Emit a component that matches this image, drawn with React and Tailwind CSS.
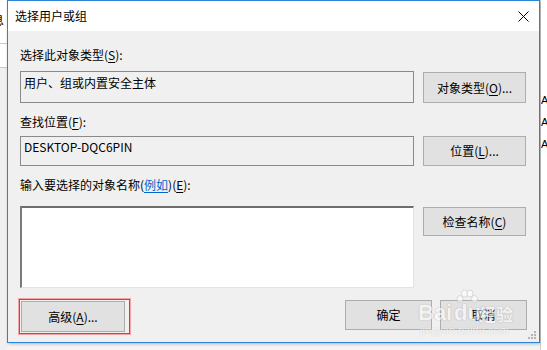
import React from "react";

const font = { fontFamily: '"Noto Sans CJK SC", "Noto Sans", sans-serif' };
const sans = { fontFamily: '"Liberation Sans", sans-serif' };

function U({ children }) {
  return <span className="underline underline-offset-[2px]">{children}</span>;
}

function Btn({ children, className = "" }) {
  return (
    <div
      className={
        "flex items-center justify-center bg-[#e1e1e1] border border-[#adadad] text-[12px] text-black " +
        className
      }
    >
      {children}
    </div>
  );
}

export default function App() {
  return (
    <div
      className="relative w-[547px] h-[350px] overflow-hidden bg-[#f4f4f4] flex"
      style={font}
    >
      {/* left desktop strip */}
      <div className="w-[7px] h-full bg-white flex flex-col">
        <div className="h-[43px] relative overflow-hidden">
          <span className="absolute left-[-8px] top-[14px] text-[12px] text-black leading-none">息</span>
        </div>
        <div className="h-px bg-[#c8c8c8]" />
        <div className="h-[23px]" />
        <div className="h-px bg-[#c8c8c8]" />
        <div className="flex-1 bg-[#f0f0f0]" />
      </div>

      {/* dialog */}
      <div className="w-[533px] h-[343px] border border-[#2b84d6] flex flex-col bg-[#f0f0f0] shadow-[1px_1px_3px_rgba(0,0,0,0.25)] relative">
        {/* title bar */}
        <div className="h-[30px] bg-white flex items-center justify-between pl-[7px] pr-[10px]">
          <span className="text-[12px] text-black">选择用户或组</span>
          <svg width="11" height="11" viewBox="0 0 11 11">
            <path d="M0.5 0.5 L10.5 10.5 M10.5 0.5 L0.5 10.5" stroke="#000" strokeWidth="1" />
          </svg>
        </div>

        {/* body */}
        <div className="flex flex-col pl-[12px] pr-[12px] text-[12px] text-black">
          <div className="mt-[16px] h-[16px] leading-[16px]">
            选择此对象类型(<U>S</U>):
          </div>
          <div className="mt-[8px] flex gap-[9px]">
            <div className="w-[394px] h-[32px] border border-[#8a8a8a] bg-[#f0f0f0] pl-[3px] leading-[22px]">
              用户、组或内置安全主体
            </div>
            <Btn className="w-[103px] h-[31px] mt-px">
              对象类型(<U>O</U>)...
            </Btn>
          </div>

          <div className="mt-[11px] h-[16px] leading-[16px]">
            查找位置(<U>F</U>):
          </div>
          <div className="mt-[6px] flex gap-[9px]">
            <div className="w-[394px] h-[30px] border border-[#8a8a8a] bg-[#f0f0f0] pl-[3px] leading-[20px]">
              DESKTOP-DQC6PIN
            </div>
            <Btn className="w-[103px] h-[30px]">
              位置(<U>L</U>)...
            </Btn>
          </div>

          <div className="mt-[11px] h-[16px] leading-[16px]">
            输入要选择的对象名称(
            <span className="text-[#0066cc] underline underline-offset-[2px]">例如</span>
            )(<U>E</U>):
          </div>
          <div className="mt-[13px] flex gap-[9px]">
            <div className="w-[394px] h-[82px] bg-white border-t-2 border-l-2 border-t-[#6e6e6e] border-l-[#7a7a7a] border-b border-r border-b-[#e3e3e3] border-r-[#e3e3e3]" />
            <Btn className="w-[103px] h-[29px] mt-px">
              检查名称(<U>C</U>)
            </Btn>
          </div>

          <div className="mt-[11px] flex items-start">
            <div className="-ml-[1px] w-[111px] h-[35px] border border-red-500 ring-1 ring-red-500/40 pt-px pl-px">
              <Btn className="w-[104px] h-[31px]">
                高级(<U>A</U>)...
              </Btn>
            </div>
            <div className="flex-1" />
            <Btn className="w-[87px] h-[30px] mt-px">确定</Btn>
            <Btn className="w-[87px] h-[30px] mt-px ml-[8px]">取消</Btn>
          </div>
        </div>

        {/* size grip */}
        <svg className="absolute right-[2px] bottom-[2px]" width="9" height="9" viewBox="0 0 9 9">
          <rect x="6" y="0" width="2" height="2" fill="#b5b5b5" />
          <rect x="3" y="3" width="2" height="2" fill="#b5b5b5" />
          <rect x="6" y="3" width="2" height="2" fill="#b5b5b5" />
          <rect x="0" y="6" width="2" height="2" fill="#b5b5b5" />
          <rect x="3" y="6" width="2" height="2" fill="#b5b5b5" />
          <rect x="6" y="6" width="2" height="2" fill="#b5b5b5" />
        </svg>
      </div>

      {/* right desktop strip */}
      <div className="flex-1 h-full flex">
        <div className="w-px bg-[#d0d0d0]" />
        <div className="flex-1 bg-white relative overflow-hidden">
          <span className="absolute left-[0px] top-[95px] text-[11px] leading-none text-black" style={sans}>Ac</span>
          <span className="absolute left-[0px] top-[117px] text-[11px] leading-none text-black" style={sans}>Ac</span>
          <span className="absolute left-[0px] top-[139px] text-[11px] leading-none text-black" style={sans}>Ac</span>
        </div>
      </div>

      {/* Baidu watermark (overlay) */}
      <div className="absolute left-[418px] top-[289px] w-[100px] h-[48px] pointer-events-none opacity-60">
        <svg className="absolute left-[38px] top-[0px]" width="22" height="18" viewBox="0 0 22 18">
          <ellipse cx="4" cy="10" rx="3" ry="3.5" fill="#fff" stroke="#c9c9c9" />
          <ellipse cx="8.5" cy="4.5" rx="3" ry="3.6" fill="#fff" stroke="#c9c9c9" />
          <ellipse cx="14" cy="4.5" rx="3" ry="3.6" fill="#fff" stroke="#c9c9c9" />
          <ellipse cx="18.5" cy="10" rx="3" ry="3.5" fill="#fff" stroke="#c9c9c9" />
        </svg>
        <span
          className="absolute left-0 top-[13px] text-[22px] font-bold leading-none text-white [text-shadow:0_0_1px_#9a9a9a,0_0_1px_#9a9a9a]"
          style={sans}
        >
          Bai
        </span>
        <span
          className="absolute left-[36px] top-[13px] text-[22px] font-bold leading-none text-white [text-shadow:0_0_1px_#9a9a9a,0_0_1px_#9a9a9a]"
          style={sans}
        >
          du
        </span>
        <span className="absolute left-[61px] top-[16px] text-[17px] font-bold leading-none text-white [text-shadow:0_0_1px_#9a9a9a,0_0_1px_#9a9a9a]">
          经验
        </span>
        <span
          className="absolute left-[2px] top-[36px] text-[11px] leading-none text-white [text-shadow:0_0_1px_#a0a0a0]"
          style={sans}
        >
          jingyan.baidu.com
        </span>
      </div>
    </div>
  );
}
